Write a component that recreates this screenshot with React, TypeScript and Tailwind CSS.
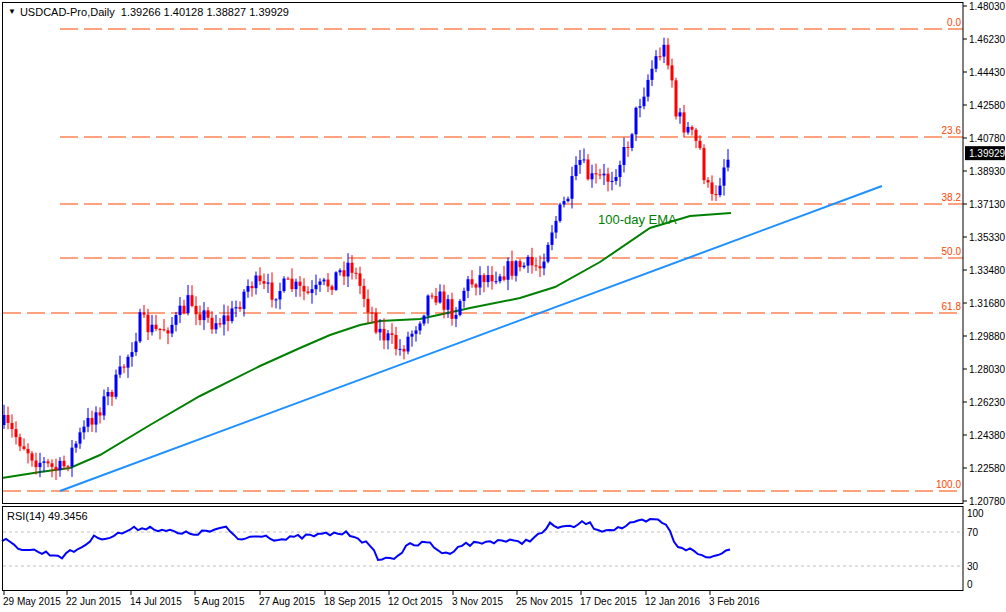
import React from 'react'

const W = 963
const priceY = (p: number) => 6 + (1.4803 - p) * 1816.5

const axisLabels = ['1.48030','1.46230','1.44430','1.42580','1.40780','1.38930','1.37130','1.35330','1.33480','1.31680','1.29880','1.28030','1.26230','1.24380','1.22580','1.20780']

const fibs = [
  { y: 29, t: '0.0' }, { y: 137, t: '23.6' }, { y: 204, t: '38.2' },
  { y: 258, t: '50.0' }, { y: 313, t: '61.8' }, { y: 491, t: '100.0' },
]

const closeKeys: [number, number][] = [
  [4,425],[20,440],[35,458],[50,468],[62,470],[75,445],[90,420],[105,400],[118,380],[130,350],[140,322],[155,332],[175,322],[190,300],[210,322],[230,318],[250,282],[270,292],[290,286],[310,296],[330,282],[350,262],[365,298],[380,332],[400,350],[412,332],[422,312],[432,288],[442,302],[455,312],[465,286],[480,277],[500,272],[520,266],[540,266],[550,232],[560,212],[570,192],[580,162],[590,180],[610,178],[625,152],[640,100],[655,60],[663,48],[670,60],[676,115],[688,130],[700,150],[706,185],[712,200],[718,185],[724,165],[731,153],
]
const rsiKeys: [number, number][] = [
  [4,540],[12,545],[22,548],[35,551],[50,554],[62,556],[80,548],[95,537],[110,537],[130,530],[145,527],[165,530],[180,534],[200,533],[225,528],[240,540],[260,534],[280,540],[300,537],[340,533],[355,535],[368,545],[380,560],[395,557],[410,545],[430,543],[445,555],[460,545],[480,543],[500,540],[520,543],[540,535],[550,525],[570,528],[585,522],[600,530],[620,528],[640,522],[660,520],[668,528],[676,545],[690,550],[700,555],[710,558],[720,552],[731,550],
]

const interp = (k: [number, number][], x: number) => {
  for (let i = 1; i < k.length; i++) {
    if (x <= k[i][0]) {
      const [x0, y0] = k[i - 1], [x1, y1] = k[i]
      return y0 + ((x - x0) / (x1 - x0)) * (y1 - y0)
    }
  }
  return k[k.length - 1][1]
}

let seed = 7
const rnd = () => { seed = (seed * 16807) % 2147483647; return seed / 2147483647 }

const candles: { x: number; o: number; c: number; h: number; l: number }[] = []
let prev = 425
for (let x = 4; x <= 731; x += 4) {
  const c = x === 731 ? 153 : interp(closeKeys, x) + (rnd() - 0.5) * 20
  const o = prev
  const h = Math.min(o, c) - rnd() * 10 - 1
  const l = Math.max(o, c) + rnd() * 10 + 1
  candles.push({ x, o, c, h, l })
  prev = c
}

const rsiPts: string[] = []
for (let x = 2; x <= 731; x += 4) {
  rsiPts.push(`${x},${(interp(rsiKeys, x) + (rnd() - 0.5) * 5).toFixed(1)}`)
}

const ema = [[2,478],[40,472],[70,468],[100,455],[150,425],[200,396],[260,366],[300,348],[330,335],[360,325],[380,321],[420,319],[470,308],[520,298],[555,287],[600,262],[650,228],[690,216],[731,213]]

const dates = [
  [4,'29 May 2015'],[67,'22 Jun 2015'],[131,'14 Jul 2015'],[195,'5 Aug 2015'],[260,'27 Aug 2015'],[325,'18 Sep 2015'],[389,'12 Oct 2015'],[453,'3 Nov 2015'],[517,'25 Nov 2015'],[581,'17 Dec 2015'],[646,'12 Jan 2016'],[710,'3 Feb 2016'],
] as const

const font = { fontFamily: '"Liberation Sans", Arial, sans-serif' }

export default function App() {
  return (
    <div className="w-[1006px] h-[612px] bg-white relative overflow-hidden" style={font}>
      <div className="absolute left-[8px] top-[4px] flex items-center gap-1 text-[11px] text-black">
        <span className="text-[8px]">▼</span>
        <span>USDCAD-Pro,Daily&nbsp;&nbsp;1.39266 1.40128 1.38827 1.39929</span>
      </div>
      <svg width="1006" height="505" className="block">
        {fibs.map(f => (
          <g key={f.t}>
            <line x1={f.t === '61.8' || f.t === '100.0' ? 3 : 60} x2={W} y1={f.y} y2={f.y} stroke="#ff4500" strokeDasharray="18,6" strokeWidth="1" />
            <text x={W - 2} y={f.y - 3} textAnchor="end" fontSize="10" fill="#ff4500">{f.t}</text>
          </g>
        ))}
        <line x1="60" y1="491" x2="882" y2="186" stroke="#1e90ff" strokeWidth="2" />
        <polyline points={ema.map(p => p.join(',')).join(' ')} fill="none" stroke="#008000" strokeWidth="2" />
        <text x="598" y="224" fontSize="13" fill="#008000">100-day EMA</text>
        {candles.map((k, i) => {
          const up = k.c < k.o
          const col = up ? '#0000ff' : '#ff0000'
          const top = Math.min(k.o, k.c)
          return (
            <g key={i}>
              <line x1={k.x} x2={k.x} y1={k.h} y2={k.l} stroke={col} />
              <rect x={k.x - 1.5} y={top} width="3" height={Math.max(1, Math.abs(k.o - k.c))} fill={col} />
            </g>
          )
        })}
        <rect x="2.5" y="2.5" width={W - 2.5} height="501" fill="none" stroke="#000" />
        {axisLabels.map((l, i) => {
          const y = 6 + i * 33
          return (
            <g key={l}>
              <line x1={W} x2={W + 4} y1={y} y2={y} stroke="#000" />
              <text x={W + 6} y={y + 4} fontSize="10" fill="#000">{l}</text>
            </g>
          )
        })}
        <rect x={W + 2} y={priceY(1.39929) - 7} width="40" height="14" fill="#000" />
        <text x={W + 6} y={priceY(1.39929) + 4} fontSize="10" fill="#fff">1.39929</text>
      </svg>
      <svg width="1006" height="107" className="block">
        <text x="7" y="15" fontSize="11" fill="#000">RSI(14) 49.3456</text>
        <line x1="3" x2={W} y1="27" y2="27" stroke="#c0c0c0" strokeDasharray="3,3" />
        <line x1="3" x2={W} y1="61" y2="61" stroke="#c0c0c0" strokeDasharray="3,3" />
        <polyline points={rsiPts.join(' ')} transform="translate(0,-505)" fill="none" stroke="#0000ff" strokeWidth="2" />
        <rect x="2.5" y="1.5" width={W - 2.5} height="84" fill="none" stroke="#000" />
        {[['100', 8], ['70', 27], ['30', 61], ['0', 79]].map(([t, y]) => (
          <text key={t} x={W + 4} y={(y as number) + 4} fontSize="10" fill="#000">{t}</text>
        ))}
        {dates.map(([x, t]) => (
          <g key={t}>
            <line x1={x} x2={x} y1="86" y2="90" stroke="#000" />
            <text x={x - 1} y="100" fontSize="10" fill="#000">{t}</text>
          </g>
        ))}
      </svg>
    </div>
  )
}
